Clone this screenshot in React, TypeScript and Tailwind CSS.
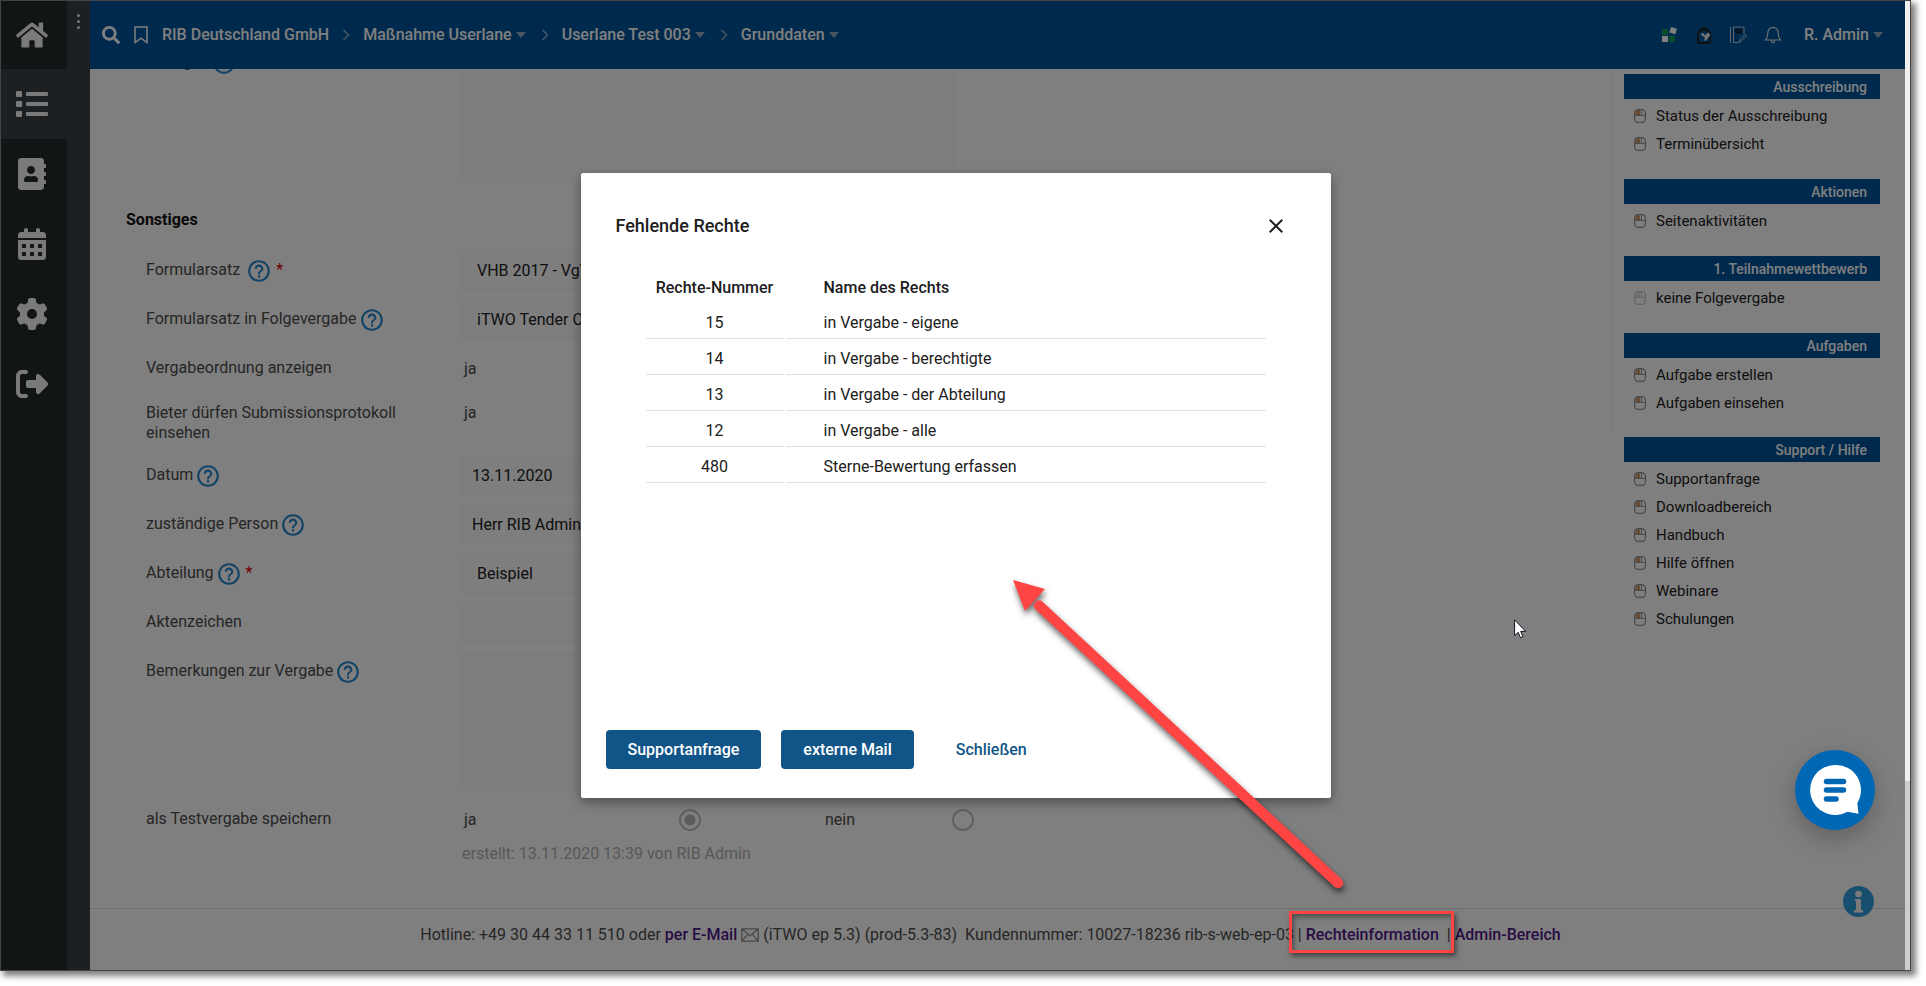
import { useState } from 'react'
import type { ReactNode } from 'react'
import { FaHome, FaList, FaAddressBook, FaSearch } from 'react-icons/fa'
import { FaRightFromBracket, FaCalendarDays, FaGear } from 'react-icons/fa6'
import { MdHelpOutline, MdClose } from 'react-icons/md'

const fieldClass =
  'w-[493px] rounded-sm border border-[#f4f4f4] bg-[#fcfcfc] text-base leading-5 text-[#202020] outline-none'

const radioClass =
  'h-[22px] w-[22px] appearance-none rounded-full border-2 border-[#c0c0c0] checked:bg-[radial-gradient(circle,#b8b8b8_5px,transparent_6px)]'

const navItems = [
  { label: 'Startseite', icon: <FaHome className="h-8 w-8" /> },
  { label: 'Liste', icon: <FaList className="h-8 w-8" />, active: true },
  { label: 'Adressbuch', icon: <FaAddressBook className="h-8 w-8" /> },
  { label: 'Kalender', icon: <FaCalendarDays className="h-8 w-8" /> },
  { label: 'Einstellungen', icon: <FaGear className="h-8 w-8" /> },
  { label: 'Abmelden', icon: <FaRightFromBracket className="h-8 w-8" /> },
]

const breadcrumbs = [
  { label: 'RIB Deutschland GmbH', menu: false },
  { label: 'Maßnahme Userlane', menu: true },
  { label: 'Userlane Test 003', menu: true },
  { label: 'Grunddaten', menu: true },
]

const sideGroups = [
  { title: 'Ausschreibung', items: ['Status der Ausschreibung', 'Terminübersicht'] },
  { title: 'Aktionen', items: ['Seitenaktivitäten'] },
  { title: '1. Teilnahmewettbewerb', items: ['keine Folgevergabe'], disabled: true },
  { title: 'Aufgaben', items: ['Aufgabe erstellen', 'Aufgaben einsehen'] },
]

const supportGroup = {
  title: 'Support / Hilfe',
  items: ['Supportanfrage', 'Downloadbereich', 'Handbuch', 'Hilfe öffnen', 'Webinare', 'Schulungen'],
}

const rights = [
  { id: 15, name: 'in Vergabe - eigene' },
  { id: 14, name: 'in Vergabe - berechtigte' },
  { id: 13, name: 'in Vergabe - der Abteilung' },
  { id: 12, name: 'in Vergabe - alle' },
  { id: 480, name: 'Sterne-Bewertung erfassen' },
]

function Caret() {
  return (
    <svg viewBox="0 0 10 6" className="ml-1 h-1.5 w-2.5" fill="#90abc4">
      <path d="M0 0h10L5 6z" />
    </svg>
  )
}

function MouseIcon({ disabled }: { disabled?: boolean }) {
  return (
    <svg
      viewBox="0 0 12 14"
      className={`h-3.5 w-3 shrink-0 ${disabled ? 'opacity-50' : ''}`}
      fill="none"
      stroke="#909090"
    >
      <rect x="1.5" y="1.5" width="4.5" height="4.5" fill={disabled ? '#d0d0d0' : '#e89858'} stroke="none" />
      <rect x="0.6" y="0.6" width="10.8" height="12.8" rx="3.6" strokeWidth="1.2" />
      <path d="M.6 6.4h10.8M4.6 1v5M7.4 1v5" strokeWidth="1" />
    </svg>
  )
}

function SideGroup({ title, items, disabled }: { title: string; items: string[]; disabled?: boolean }) {
  return (
    <section className="w-64">
      <h3 className="mb-[3px] flex h-[25px] items-center justify-end bg-[#00549a] pr-[13px] text-sm font-medium text-white">
        {title}
      </h3>
      <ul>
        {items.map((item) => (
          <li key={item}>
            <a href="#" className="flex h-7 items-center gap-2.5 pl-2.5 text-[15px] text-[#202020]">
              <MouseIcon disabled={disabled} />
              {item}
            </a>
          </li>
        ))}
      </ul>
    </section>
  )
}

interface FormRowProps {
  label: string
  htmlFor?: string
  help?: boolean
  spaced?: boolean
  required?: boolean
  multiline?: boolean
  children: ReactNode
}

function FormRow({ label, htmlFor, help, spaced, required, multiline, children }: FormRowProps) {
  return (
    <div className="grid min-h-[49px] grid-cols-[316px_1fr]">
      <div className={`flex pr-10 leading-5 ${multiline ? 'pt-2.5 pb-2' : 'pt-3.5'}`}>
        <label htmlFor={htmlFor}>{label}</label>
        {help && (
          <MdHelpOutline className={`-my-0.5 h-[26px] w-[26px] shrink-0 text-[#2484c8] ${spaced ? 'ml-1.5' : 'ml-0.5'}`} />
        )}
        {required && <span className="ml-1 text-[#e00000]">*</span>}
      </div>
      <div className={multiline ? 'pt-2.5 leading-5' : 'flex items-center'}>{children}</div>
    </div>
  )
}

function TopBar() {
  return (
    <header className="flex h-[68px] shrink-0 items-center bg-[#00549a] pr-[22px] pl-3 font-medium text-white">
      <button type="button" aria-label="Suchen">
        <FaSearch className="h-[18px] w-[18px]" />
      </button>
      <button type="button" aria-label="Lesezeichen" className="ml-3.5">
        <svg viewBox="0 0 14 18" className="h-[18px] w-3.5" fill="none" stroke="currentColor" strokeWidth="1.5">
          <path d="M1 1h12v15.6l-6-4.4-6 4.4z" />
        </svg>
      </button>
      <nav className="ml-3.5 flex items-center">
        {breadcrumbs.map((crumb, i) => (
          <div key={crumb.label} className="flex items-center">
            {i > 0 && (
              <svg viewBox="0 0 8 12" className="mx-[13px] h-3 w-2" fill="none" stroke="#90abc4" strokeWidth="1.6">
                <path d="M1.5 1l5 5-5 5" />
              </svg>
            )}
            <a href="#" className={`flex items-center ${crumb.menu ? 'mr-0.5' : ''}`}>
              {crumb.label}
              {crumb.menu && <Caret />}
            </a>
          </div>
        ))}
      </nav>
      <div className="ml-auto flex items-center">
        <button type="button" aria-label="Apps">
          <svg viewBox="0 0 16 16" className="h-4 w-4">
            <rect x="1" y="2" width="6" height="6" fill="#109c58" />
            <rect x="1" y="9" width="6" height="6" fill="#fff" />
            <rect x="8" y="9" width="6" height="6" fill="#109c58" />
            <path d="M10 0l6 1.8-1.8 5.4-6-1.8z" fill="#fff" />
          </svg>
        </button>
        <button type="button" aria-label="Aufgaben" className="ml-5">
          <svg viewBox="0 0 14 17" className="h-[17px] w-3.5">
            <path d="M4 2.5h6l3 3v9q0 1.500-1.500 1.500h-9Q1 16 1 14.500v-9z" fill="none" stroke="#202020" strokeWidth="2" />
            <path d="M4 .5h6v3H4z" fill="#202020" />
            <path d="M3.500 7l2.500-1 2 2.500 3-3 2.500 2.500-4.500 5.500H7l1-2.500z" fill="#e8eef4" />
          </svg>
        </button>
        <button type="button" aria-label="Notizen" className="ml-[18px]">
          <svg viewBox="0 0 18 18" className="h-[18px] w-[18px]" fill="none" stroke="#c0ccd8">
            <path d="M1.500 1v16M4.500 1v15.500h5M4.500 1h10.500v7" />
            <path d="M7 4h5v2.500H7z" stroke="#101820" strokeWidth="1.4" />
            <path d="M10 16.500l1-3 5-5 1.500 1.500-5 5z" />
          </svg>
        </button>
        <button type="button" aria-label="Benachrichtigungen" className="ml-[17px]">
          <svg viewBox="0 0 18 18" className="h-[18px] w-[18px]" fill="none" stroke="#d8e0e8" strokeWidth="1.2">
            <path d="M1.500 14h15c-1.800-1.800-2.300-3-2.300-6.800C14.200 3.500 11.800 1.300 9 1.300S3.800 3.500 3.800 7.200c0 3.800-.5 5-2.300 6.800zM7.300 14.500c.2 1.500.8 2.200 1.700 2.200s1.500-.7 1.700-2.200" />
          </svg>
        </button>
        <button type="button" className="ml-[22px] flex items-center">
          R. Admin
          <Caret />
        </button>
      </div>
    </header>
  )
}

function RightsDialog({ onClose }: { onClose: () => void }) {
  return (
    <div
      role="dialog"
      aria-labelledby="rights-title"
      className="flex h-[625px] w-[750px] flex-col rounded-xs bg-white text-[#202020] shadow-[0_4px_12px_rgba(0,0,0,0.4)]"
    >
      <div className="flex items-center justify-between pt-[41px] pr-[43px] pl-[35px]">
        <h2 id="rights-title" className="text-lg leading-6 font-medium">
          Fehlende Rechte
        </h2>
        <button type="button" aria-label="Dialog schließen" onClick={onClose}>
          <MdClose className="h-6 w-6" />
        </button>
      </div>
      <table className="mx-[63px] mt-[31px] table-fixed border-separate border-spacing-0.5">
        <thead>
          <tr className="h-8">
            <th className="w-[138px] pt-0.5 font-medium">Rechte-Nummer</th>
            <th className="pt-0.5 pl-[38px] text-left font-medium">Name des Rechts</th>
          </tr>
        </thead>
        <tbody>
          {rights.map((right) => (
            <tr key={right.id} className="h-[34px]">
              <td className="border-b border-[#e0e0e0] pt-0.5 text-center">{right.id}</td>
              <td className="border-b border-[#e0e0e0] pt-0.5 pl-[38px]">{right.name}</td>
            </tr>
          ))}
        </tbody>
      </table>
      <div className="mt-auto flex gap-5 px-[25px] pb-[29px] font-medium">
        <button type="button" className="h-[39px] rounded bg-[#115588] px-[22px] text-white">
          Supportanfrage
        </button>
        <button type="button" className="h-[39px] rounded bg-[#115588] px-[22px] text-white">
          externe Mail
        </button>
        <button type="button" className="h-[39px] px-[22px] text-[#115588]" onClick={onClose}>
          Schließen
        </button>
      </div>
    </div>
  )
}

export default function App() {
  const [isDialogOpen, setIsDialogOpen] = useState(true)

  return (
    <div className="h-screen bg-white pr-[15px] pb-[15px] font-['Roboto',sans-serif] text-base">
      <div className="relative flex h-full border border-[#444444] bg-white shadow-[4px_4px_6px_1px_rgba(0,0,0,0.5)]">
        <nav className="flex w-[66px] shrink-0 flex-col bg-[#222a2a]">
          {navItems.map((item) => (
            <a
              key={item.label}
              href="#"
              aria-label={item.label}
              className={`flex h-[70px] items-center justify-center pr-1 text-[#f4f4f4] first:h-[68px] ${
                item.active ? 'bg-[#384046]' : ''
              }`}
            >
              {item.icon}
            </a>
          ))}
        </nav>
        <div className="flex w-[23px] shrink-0 flex-col items-center gap-[3px] bg-[#384046] pt-[13px]">
          <span className="h-[3px] w-[3px] rounded-full bg-[#e8e8e8]" />
          <span className="h-[3px] w-[3px] rounded-full bg-[#e8e8e8]" />
          <span className="h-[3px] w-[3px] rounded-full bg-[#e8e8e8]" />
        </div>

        <div className="mr-[5px] flex min-w-0 flex-1 flex-col">
          <TopBar />
          <main className="flex min-h-0 flex-1 overflow-hidden">
            <form className="-mt-[31px] flex-1 pl-14 text-[#4c4c4c]">
              <FormRow label="Auflagen" htmlFor="conditions" help>
                <textarea id="conditions" className={`${fieldClass} my-1.5 h-[136px] resize-none`} />
              </FormRow>
              <h2 className="mt-6 mb-4 -ml-5 leading-5 font-bold text-[#101010]">Sonstiges</h2>
              <FormRow label="Formularsatz" htmlFor="form-set" help spaced required>
                <select id="form-set" className={`${fieldClass} h-[39px] appearance-none pl-3.5`}>
                  <option>VHB 2017 - VgV</option>
                </select>
              </FormRow>
              <FormRow label="Formularsatz in Folgevergabe" htmlFor="form-set-next" help>
                <select id="form-set-next" className={`${fieldClass} h-[39px] appearance-none pl-3.5`}>
                  <option>iTWO Tender Offen</option>
                </select>
              </FormRow>
              <FormRow label="Vergabeordnung anzeigen">
                <span className="pl-0.5">ja</span>
              </FormRow>
              <FormRow label="Bieter dürfen Submissionsprotokoll einsehen" multiline>
                <span className="pl-0.5">ja</span>
              </FormRow>
              <FormRow label="Datum" htmlFor="date" help>
                <input id="date" type="text" defaultValue="13.11.2020" className={`${fieldClass} h-[39px] px-[9px]`} />
              </FormRow>
              <FormRow label="zuständige Person" htmlFor="person" help>
                <input id="person" type="text" defaultValue="Herr RIB Admin" className={`${fieldClass} h-[39px] px-[9px]`} />
              </FormRow>
              <FormRow label="Abteilung" htmlFor="department" help required>
                <select id="department" className={`${fieldClass} h-[39px] appearance-none pl-3.5`}>
                  <option>Beispiel</option>
                </select>
              </FormRow>
              <FormRow label="Aktenzeichen" htmlFor="file-number">
                <input id="file-number" type="text" className={`${fieldClass} h-[39px] px-[9px]`} />
              </FormRow>
              <FormRow label="Bemerkungen zur Vergabe" htmlFor="remarks" help>
                <textarea id="remarks" className={`${fieldClass} my-1.5 h-[136px] resize-none`} />
              </FormRow>
              <FormRow label="als Testvergabe speichern">
                <div className="grid grid-cols-[217px_146px_127px_22px] items-center">
                  <label htmlFor="test-yes" className="pl-0.5">
                    ja
                  </label>
                  <input id="test-yes" type="radio" name="test" defaultChecked className={radioClass} />
                  <label htmlFor="test-no">nein</label>
                  <input id="test-no" type="radio" name="test" className={radioClass} />
                </div>
              </FormRow>
              <p className="pl-[316px] leading-5 text-[#b0b0b0]">erstellt: 13.11.2020 13:39 von RIB Admin</p>
            </form>

            <aside className="w-[294px] shrink-0 pt-[5px]">
              <div className="flex flex-col gap-[21px] border-l border-[#f0f0f0] pb-3 pl-3">
                {sideGroups.map((group) => (
                  <SideGroup key={group.title} {...group} />
                ))}
              </div>
              <div className="pt-2 pl-[13px]">
                <SideGroup {...supportGroup} />
              </div>
            </aside>
          </main>
          <footer className="flex h-[62px] shrink-0 items-start justify-center border-t border-[#e0e0e0] pt-4 pr-3.5 leading-5 whitespace-pre text-[#4c4c4c]">
            Hotline: +49 30 44 33 11 510 oder{' '}
            <a href="#" className="flex items-center gap-1 font-medium text-[#501888]">
              per E-Mail
              <svg viewBox="0 0 18 14" className="h-3.5 w-[18px]" fill="none" stroke="#909090" strokeWidth="1.3">
                <path d="M.8.8h16.400v12.400H.8zM.8.8L9 8l8.200-7.200M.8 13.200l6-7M17.200 13.200l-6-7" />
              </svg>
            </a>
            {' (iTWO ep 5.3) (prod-5.3-83)  Kundennummer: 10027-18236 rib-s-web-ep-03 | '}
            <a href="#" className="font-medium text-[#501888]" onClick={() => setIsDialogOpen(true)}>
              Rechteinformation
            </a>
            {'  | '}
            <a href="#" className="font-medium text-[#501888]">
              Admin-Bereich
            </a>
          </footer>
        </div>

        {/* Info bubble */}
        <button
          type="button"
          aria-label="Information"
          className="absolute right-[36px] bottom-[53px] h-[31px] w-[31px] rounded-full bg-[#329fdc]"
        >
          <svg viewBox="0 0 31 31" className="h-full w-full" fill="#f4f4f4">
            <circle cx="15.500" cy="8" r="3.300" />
            <path d="M12 13h6v11h2v2.500h-9V24h2v-8.500h-1z" />
          </svg>
        </button>

        {isDialogOpen && (
          <div className="absolute inset-0 flex items-center justify-center bg-black/50">
            <RightsDialog onClose={() => setIsDialogOpen(false)} />
          </div>
        )}

        {/* Scrollbar */}
        <div className="absolute inset-y-0 right-0 flex w-[5px] flex-col justify-end bg-[#f0f0f0]">
          <div className="h-[189px] bg-[#cdcdcd]" />
        </div>

        {/* Chat launcher */}
        <button
          type="button"
          aria-label="Chat öffnen"
          className="absolute right-[35px] bottom-[140px] h-20 w-20 rounded-full bg-[#0067b4] shadow-[0_8px_24px_rgba(0,0,0,0.25)]"
        >
          <svg viewBox="0 0 80 80" className="h-full w-full">
            <path
              d="M40 15a25 25 0 1 0 12.500 46.700l11 2.100-1.200-10.800A25 25 0 0 0 40 15z"
              fill="#fff"
            />
            <path d="M31.500 31.500h17M31.500 40h17M31.500 49h9.500" stroke="#0067b4" strokeWidth="5.500" strokeLinecap="round" />
          </svg>
        </button>

        {/* Highlight around the footer link and the arrow up to the dialog */}
        <div className="pointer-events-none absolute right-[456px] bottom-[17px] h-[42px] w-[165px] border-3 border-[#ff4444] shadow-[2px_3px_5px_rgba(0,0,0,0.5),inset_2px_3px_5px_rgba(0,0,0,0.4)]" />
        <svg
          viewBox="0 0 340 325"
          className="pointer-events-none absolute right-[557px] bottom-[65px] h-[325px] w-[340px] drop-shadow-[1px_4px_3px_rgba(0,0,0,0.6)]"
        >
          <path d="M26 25.500L325 303" stroke="#ff4444" strokeWidth="10.500" strokeLinecap="round" />
          <path d="M0 0l32 9-20 22z" fill="#ff4444" />
        </svg>
        <svg viewBox="0 0 13 20" className="pointer-events-none absolute right-[383px] bottom-[331px] h-5 w-[13px]">
          <path d="M.6.800v15.800l3.600-3.300 2.300 5.400 2.500-1-2.300-5.300h5z" fill="#fff" stroke="#101020" />
        </svg>
      </div>
    </div>
  )
}
